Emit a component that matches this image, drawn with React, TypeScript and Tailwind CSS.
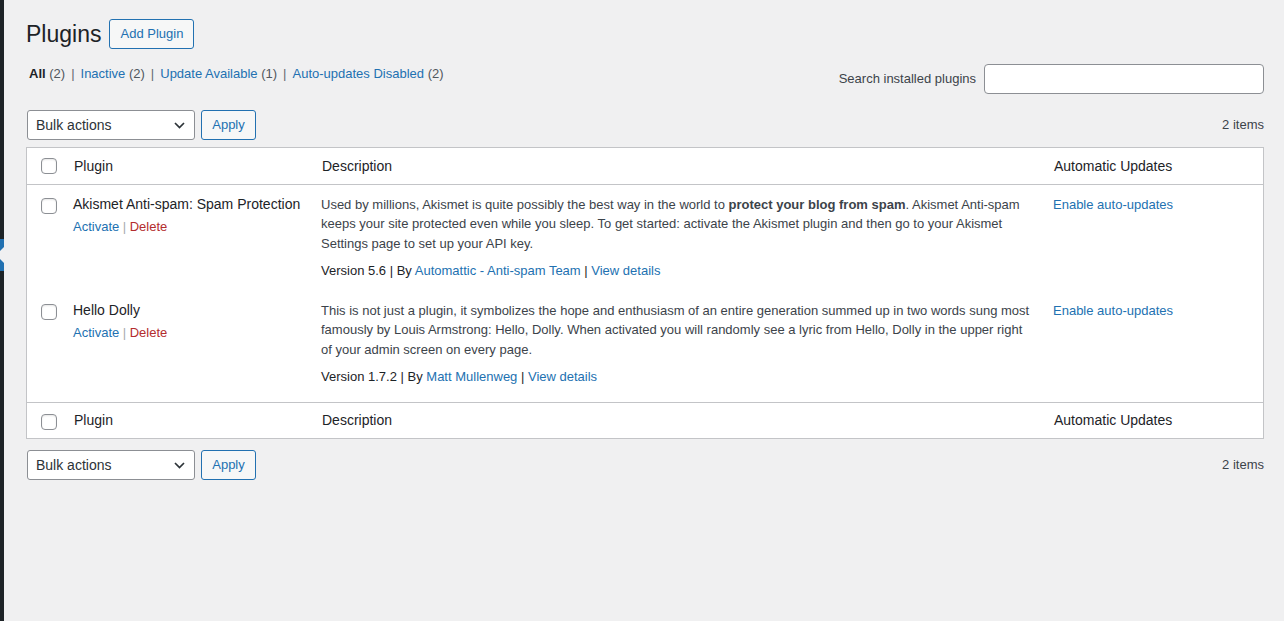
import React from "react";

const Check = ({ className = "" }: { className?: string }) => (
  <span
    className={`block w-[16px] h-[16px] rounded-[4px] border border-[#8c8f94] bg-white shadow-[inset_0_1px_2px_rgba(0,0,0,0.1)] ${className}`}
  />
);

const Chevron = () => (
  <svg width="11" height="7" viewBox="0 0 11 7" className="text-[#2c3338]">
    <path d="M1 1l4.5 4.5L10 1" fill="none" stroke="currentColor" strokeWidth="1.7" />
  </svg>
);

const TableNav = () => (
  <div className="flex items-center h-[30px] pl-[1px]">
    <div className="w-[168px] h-[30px] rounded-[3px] border border-[#8c8f94] bg-white flex items-center justify-between pl-[8px] pr-[9px] text-[14px] text-[#2c3338]">
      <span>Bulk actions</span>
      <Chevron />
    </div>
    <button className="ml-[6px] h-[30px] w-[55px] rounded-[3px] border border-[#2271b1] bg-[#f6f7f7] text-[13px] text-[#2271b1]">
      Apply
    </button>
    <div className="ml-auto text-[13px] text-[#3c434a]">2 items</div>
  </div>
);

const HeadRow = ({ top }: { top: boolean }) => (
  <div
    className={`grid grid-cols-[36px_248px_732px_1fr] items-center text-[14px] text-[#1d2327] ${
      top ? "h-[37px] border-b border-[#c3c4c7]" : "h-[36px] border-t border-[#c3c4c7]"
    }`}
  >
    <div className={top ? "pl-[14px]" : "pl-[14px] pt-[3px]"}>
      <Check />
    </div>
    <div className="pl-[11px]">Plugin</div>
    <div className="pl-[11px]">Description</div>
    <div className="pl-[11px]">Automatic Updates</div>
  </div>
);

type RowProps = {
  name: string;
  lines: React.ReactNode[];
  version: string;
  author: string;
  h: string;
};

const Row = ({ name, lines, version, author, h }: RowProps) => (
  <div className={`grid grid-cols-[36px_248px_732px_1fr] ${h}`}>
    <div className="pl-[14px] pt-[13px]">
      <Check />
    </div>
    <div className="pl-[10px] pt-[9px]">
      <div className="text-[14px] leading-[20px] text-[#1d2327] whitespace-nowrap">{name}</div>
      <div className="mt-[3px] text-[13px] leading-[19.5px] whitespace-nowrap">
        <span className="text-[#2271b1]">Activate</span>
        <span className="text-[#a7aaad] mx-[3.5px]">|</span>
        <span className="text-[#b32d2e]">Delete</span>
      </div>
    </div>
    <div className="pl-[10px] pt-[9.5px] text-[13px] leading-[19.5px]">
      <div className="text-[#3c434a] whitespace-nowrap">
        {lines.map((l, i) => (
          <div key={i}>{l}</div>
        ))}
      </div>
      <div className="mt-[7.5px] text-[#1d2327] whitespace-nowrap">
        Version {version} | By <span className="text-[#2271b1]">{author}</span> |{" "}
        <span className="text-[#2271b1]">View details</span>
      </div>
    </div>
    <div className="pl-[10px] pt-[9.5px] text-[13px] leading-[19.5px] text-[#2271b1] whitespace-nowrap">
      Enable auto-updates
    </div>
  </div>
);

const Sep = () => <span className="mx-[6px] text-[#646970]">|</span>;

export default function App() {
  return (
    <div className="flex min-h-[621px] bg-[#f0f0f1] font-['Liberation_Sans',Arial,sans-serif]">
      <div className="w-[4px] shrink-0 flex flex-col bg-[#1d2327]">
        <div className="h-[239px]" />
        <svg width="4" height="32" viewBox="0 0 4 32" className="block">
          <rect width="4" height="32" fill="#2271b1" />
          <polygon points="4,8 0,12 0,20 4,24" fill="#f0f0f1" />
        </svg>
      </div>
      <div className="flex-1 pl-[22px] pr-[20px]">
        <div className="flex items-center pt-[19px]">
          <h1 className="text-[23px] leading-[30px] text-[#1d2327] font-normal">Plugins</h1>
          <button className="ml-[8px] h-[30px] w-[85px] rounded-[3px] border border-[#2271b1] bg-[#f6f7f7] text-[13px] text-[#2271b1]">
            Add Plugin
          </button>
        </div>

        <div className="flex items-start justify-between mt-[11px]">
          <div className="pl-[3px] pt-[1px] text-[13px] leading-[26px] text-[#646970] whitespace-nowrap">
            <span className="font-bold text-[#1d2327]">All</span> <span className="text-[#50575e]">(2)</span>
            <Sep />
            <span className="text-[#2271b1]">Inactive</span> <span className="text-[#50575e]">(2)</span>
            <Sep />
            <span className="text-[#2271b1]">Update Available</span> <span className="text-[#50575e]">(1)</span>
            <Sep />
            <span className="text-[#2271b1]">Auto-updates Disabled</span> <span className="text-[#50575e]">(2)</span>
          </div>
          <div className="mt-[4px] flex items-center">
            <span className="text-[13px] text-[#3c434a]">Search installed plugins</span>
            <div className="ml-[8px] w-[280px] h-[30px] rounded-[4px] border border-[#8c8f94] bg-white" />
          </div>
        </div>

        <div className="mt-[16px]">
          <TableNav />
        </div>

        <div className="mt-[7px] border border-[#c3c4c7] bg-white">
          <HeadRow top />
          <Row
            h="h-[106px]"
            name="Akismet Anti-spam: Spam Protection"
            lines={[
              <>
                Used by millions, Akismet is quite possibly the best way in the world to{" "}
                <b className="font-bold">protect your blog from spam</b>. Akismet Anti-spam
              </>,
              "keeps your site protected even while you sleep. To get started: activate the Akismet plugin and then go to your Akismet",
              "Settings page to set up your API key.",
            ]}
            version="5.6"
            author="Automattic - Anti-spam Team"
          />
          <Row
            h="h-[111px]"
            name="Hello Dolly"
            lines={[
              "This is not just a plugin, it symbolizes the hope and enthusiasm of an entire generation summed up in two words sung most",
              "famously by Louis Armstrong: Hello, Dolly. When activated you will randomly see a lyric from Hello, Dolly in the upper right",
              "of your admin screen on every page.",
            ]}
            version="1.7.2"
            author="Matt Mullenweg"
          />
          <HeadRow top={false} />
        </div>

        <div className="mt-[11px]">
          <TableNav />
        </div>
      </div>
    </div>
  );
}
